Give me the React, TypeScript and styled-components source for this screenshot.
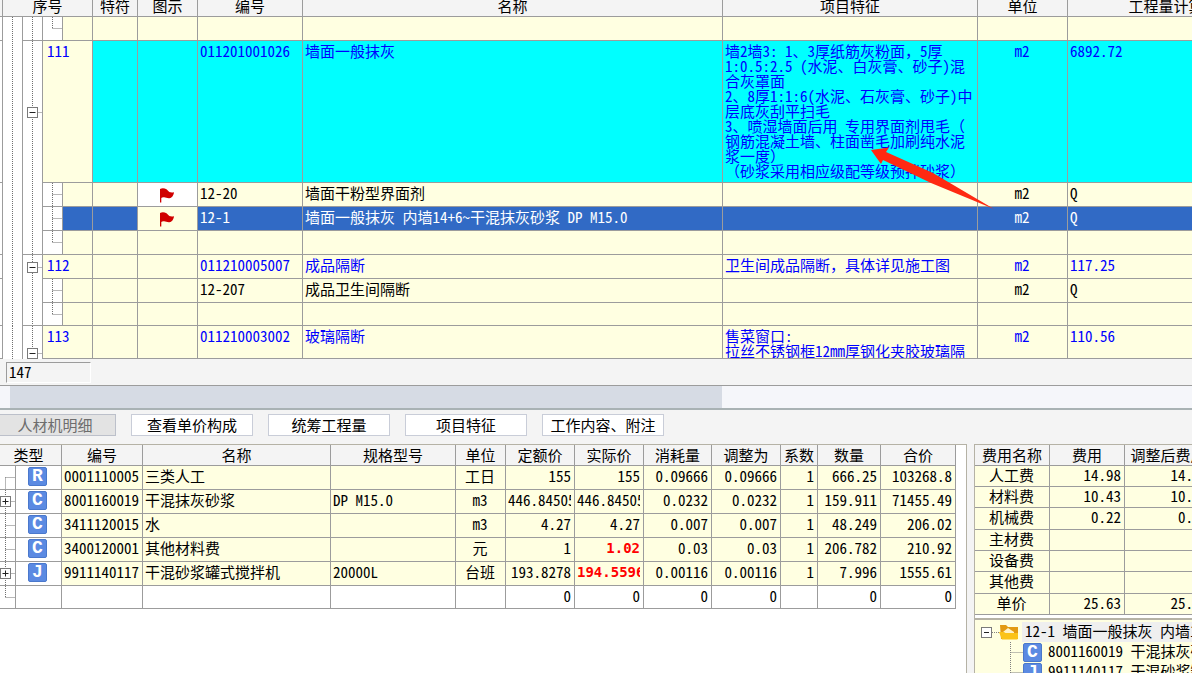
import React from 'react';
import styled, { createGlobalStyle, css } from 'styled-components';

const MONO = '"Noto Sans Mono CJK SC", "Noto Sans CJK SC", "Liberation Mono", monospace';
const LINE = '#9c9c9c';
const CREAM = '#ffffe1';
const CYAN = '#00ffff';
const NAVY = '#316ac5';
const PANEL = '#f4f4f4';

const GlobalStyle = createGlobalStyle`
  *, *::before, *::after { box-sizing: border-box; }
  body { margin: 0; background: ${PANEL}; }
  body, button, input { font: 15px/15px ${MONO}; color: #000; }
`;

const Page = styled.div`
  display: flex;
  flex-direction: column;
  height: 100vh;
  overflow: hidden;
`;

/* ---------- grid primitives ---------- */

const Grid = styled.table<{ $width: number }>`
  width: ${p => p.$width}px;
  table-layout: fixed;
  border-collapse: separate;
  border-spacing: 0;
`;

const Row = styled.tr<{ $h: number }>`
  height: ${p => p.$h}px;
`;

type CellProps = {
  $bg?: string;
  $color?: string;
  $align?: 'left' | 'center' | 'right';
  $bold?: boolean;
};

const Cell = styled.td<CellProps>`
  padding: 2px 3px 0 2px;
  vertical-align: top;
  text-align: ${p => p.$align || 'left'};
  background: ${p => p.$bg || CREAM};
  color: ${p => p.$color || '#000'};
  border-right: 1px solid ${LINE};
  border-bottom: 1px solid ${LINE};
  white-space: nowrap;
  ${p => p.$bold && css`font: bold 14px/17px "DejaVu Sans Mono", monospace;`}
`;

const FeeCell = styled(Cell)`
  padding-top: 1px;
`;

const Clip = styled.div`
  overflow-x: clip;
`;

const Feature = styled.div`
  white-space: pre;
`;

const Partial = styled(Feature)`
  height: 30px;
  overflow-y: clip;
`;

const HeadCell = styled.th`
  padding: 0;
  font-weight: normal;
  background: ${PANEL};
  border-right: 1px solid ${LINE};
  border-bottom: 1px solid ${LINE};
  white-space: nowrap;
  vertical-align: top;
`;

/* ---------- tree rails ---------- */

const Rail = styled.td<{ $bottom?: boolean }>`
  padding: 0;
  background: #fff;
  border-right: 1px solid ${LINE};
  border-bottom: ${p => (p.$bottom ? `1px solid ${LINE}` : '0')};
`;

const RailBox = styled.div`
  display: flex;
`;

type RailKind = 'pass' | 'tee' | 'end' | 'minus' | 'plus' | 'start';

function RailArt({ kind, h, w = 19, x = 9, at }: { kind: RailKind; h: number; w?: number; x?: number; at?: number }) {
  const mid = (at ?? Math.floor(h / 2)) + 0.5;
  const cx = x + 0.5;
  const boxed = kind === 'minus' || kind === 'plus';
  return (
    <RailBox>
      <svg width={w} height={h} aria-hidden="true">
        <g stroke="#707070" fill="none" strokeDasharray="1 1">
          <path d={`M${cx} ${kind === 'start' ? mid : 0}V${kind === 'end' ? mid : h}`} />
          {kind !== 'pass' && <path d={`M${cx} ${mid}H${w}`} />}
        </g>
        {boxed && (
          <>
            <rect x={cx - 5} y={mid - 5} width="10" height="10" fill="#fff" stroke="#7a7a7a" />
            <path d={`M${cx - 3} ${mid}h6`} stroke="#222" />
            {kind === 'plus' && <path d={`M${cx} ${mid - 3}v6`} stroke="#222" />}
          </>
        )}
      </svg>
    </RailBox>
  );
}

const FlagWrap = styled.div`
  display: flex;
  justify-content: center;
  padding-top: 2px;
`;

function Flag() {
  return (
    <FlagWrap>
      <svg width="14" height="17" viewBox="0 0 14 17" role="img" aria-label="flag">
        <path d="M0 2C2 .8 4.500 1 6.500 2.300 8.200 3.400 8.500 5 10 5.300c1.200.2 2.600.2 4-.1-.4 3.200-2.200 5.800-4.600 6C6.800 11.400 5.500 10 3.500 10.300 2.500 10.500 1.800 10.700 1.300 11v4.500H0z" fill="#d00000" />
      </svg>
    </FlagWrap>
  );
}

/* ---------- bill table ---------- */

const BillPane = styled.section`
  position: relative;
  flex: none;
  overflow: hidden;
`;

const Arrow = styled.svg`
  position: absolute;
  left: 865px;
  top: 140px;
`;

type Bill = {
  h: number;
  kind: 'item' | 'child' | 'blank';
  id?: string;
  code?: string;
  name?: string;
  feature?: React.ReactNode;
  unit?: string;
  qty?: string;
  flag?: boolean;
  tone?: 'cyan' | 'selected';
  edge?: boolean;
  groupEnd?: boolean;
  boxAt?: number;
};

const featureText = [
  '墙2墙3: 1、3厚纸筋灰粉面，5厚',
  '1:0.5:2.5 (水泥、白灰膏、砂子)混',
  '合灰罩面',
  '2、8厚1:1:6(水泥、石灰膏、砂子)中',
  '层底灰刮平扫毛',
  '3、喷湿墙面后用 专用界面剂甩毛（',
  '钢筋混凝土墙、柱面凿毛加刷纯水泥',
  '浆一度）',
  '（砂浆采用相应级配等级预拌砂浆）',
].join('\n');

const bills: Bill[] = [
  { h: 24, kind: 'blank', edge: true, groupEnd: true },
  { h: 142, kind: 'item', id: '111', code: '011201001026', name: '墙面一般抹灰', feature: <Feature>{featureText}</Feature>, unit: 'm2', qty: '6892.72', tone: 'cyan', edge: true },
  { h: 24, kind: 'child', code: '12-20', name: '墙面干粉型界面剂', unit: 'm2', qty: 'Q', flag: true },
  { h: 24, kind: 'child', code: '12-1', name: '墙面一般抹灰 内墙14+6~干混抹灰砂浆 DP M15.0', unit: 'm2', qty: 'Q', flag: true, tone: 'selected' },
  { h: 24, kind: 'blank', edge: true, groupEnd: true },
  { h: 24, kind: 'item', id: '112', code: '011210005007', name: '成品隔断', feature: '卫生间成品隔断，具体详见施工图', unit: 'm2', qty: '117.25', edge: true },
  { h: 24, kind: 'child', code: '12-207', name: '成品卫生间隔断', unit: 'm2', qty: 'Q' },
  { h: 23, kind: 'blank', edge: true, groupEnd: true },
  { h: 33, kind: 'item', id: '113', code: '011210003002', name: '玻璃隔断', feature: <Partial>{'售菜窗口:\n拉丝不锈钢框12mm厚钢化夹胶玻璃隔'}</Partial>, unit: 'm2', qty: '110.56', edge: true, boxAt: 27 },
];

const IdCell = styled(Cell)`
  padding-left: 4px;
`;

function BillRow({ b }: { b: Bill }) {
  const item = b.kind === 'item';
  const selected = b.tone === 'selected';
  const bg = b.tone === 'cyan' ? CYAN : selected ? NAVY : CREAM;
  const color = selected ? '#fff' : item ? '#0000ff' : '#000';
  return (
    <Row $h={b.h}>
      <Rail $bottom={b.edge} />
      <Rail><RailArt kind="pass" h={b.h} /></Rail>
      <Rail $bottom={b.groupEnd}>
        <RailArt kind={item ? 'minus' : 'pass'} h={b.groupEnd ? b.h - 1 : b.h} at={b.boxAt} />
      </Rail>
      {item ? (
        <IdCell colSpan={2} $color={color}>{b.id}</IdCell>
      ) : (
        <>
          <Rail $bottom><RailArt kind={b.kind === 'blank' ? 'end' : 'tee'} h={b.h - 1} /></Rail>
          <Cell $bg={selected ? NAVY : CREAM} />
        </>
      )}
      <Cell $bg={bg} />
      <Cell $bg={b.flag ? (selected ? CREAM : '#fff') : bg}>{b.flag && <Flag />}</Cell>
      <Cell $bg={bg} $color={color}>{b.code}</Cell>
      <Cell $bg={bg} $color={color}>{b.name}</Cell>
      <Cell $bg={bg} $color={color}>{b.feature}</Cell>
      <Cell $bg={bg} $color={color} $align="center">{b.unit}</Cell>
      <Cell $bg={bg} $color={color}>{b.qty}</Cell>
    </Row>
  );
}

const billCols = [3, 20, 20, 20, 30, 45, 60, 105, 420, 255, 90, 212];

const BillHead = styled(HeadCell)`
  line-height: 12px;
`;

const Cols = ({ widths }: { widths: number[] }) => (
  <colgroup>{widths.map((w, i) => <col key={i} style={{ width: w }} />)}</colgroup>
);

const sum = (a: number[]) => a.reduce((s, n) => s + n, 0);

/* ---------- status, scroll bar, tabs ---------- */

const StatusBar = styled.div`
  flex: none;
  padding: 3px 6px 2px;
  background: ${PANEL};
  border-bottom: 1px solid ${LINE};
`;

const Counter = styled.output`
  display: block;
  width: 85px;
  height: 21px;
  padding: 1px 2px;
  border: 1px solid #fff;
  border-top-color: ${LINE};
  border-left-color: ${LINE};
`;

const ScrollTrack = styled.div`
  flex: none;
  height: 24px;
  display: flex;
  padding-left: 10px;
  background: #f5f6fa;
  border-bottom: 2px solid #a9b2b4;
`;

const Thumb = styled.div`
  width: 712px;
  background: #d6dbe4;
`;

const Tabs = styled.nav`
  flex: none;
  display: flex;
  gap: 15px;
  padding: 4px 0 8px;
  margin-left: -6px;
`;

const Tab = styled.button<{ $active?: boolean }>`
  width: 122px;
  height: 22px;
  padding: 0 0 2px;
  border: 1px solid ${p => (p.$active ? '#bcc0ca' : '#c9cdd8')};
  background: ${p => (p.$active ? '#e3e3e3' : '#fff')};
  color: ${p => (p.$active ? '#6d6d6d' : '#000')};
`;

/* ---------- lower panes ---------- */

const Lower = styled.div`
  flex: 1;
  min-height: 0;
  display: grid;
  grid-template-columns: minmax(0, 1fr) 218px;
  gap: 7px;
`;

const Pane = styled.section`
  min-width: 0;
  overflow: hidden;
  background: #fff;
  border-top: 1px solid #b5b2a5;
`;

const LeftPane = styled(Pane)`
  border-right: 1px solid #b5b2a5;
`;

const RightPane = styled(Pane)`
  border-left: 1px solid #b5b2a5;
`;

const LowHead = styled(HeadCell)`
  padding-top: 2px;
`;

const TypeHead = styled(LowHead)`
  padding-right: 4px;
`;

const Badge = styled.span`
  display: flex;
  align-items: center;
  justify-content: center;
  flex: none;
  width: 19px;
  height: 19px;
  border: 1px solid #4a78cc;
  border-radius: 2px;
  background: #5b8ae2;
  color: #fff;
  font: bold 18px/17px "Liberation Mono", monospace;
`;

const BadgeCell = styled(Cell)`
  padding: 1px 12px 0;
`;

type Resource = { rail: RailKind; type?: string; code?: string; name?: string; spec?: string; unit?: string; nums: string[]; hot?: boolean };

const resources: Resource[] = [
  { rail: 'start', type: 'R', code: '0001110005', name: '三类人工', unit: '工日', nums: ['155', '155', '0.09666', '0.09666', '1', '666.25', '103268.8'] },
  { rail: 'plus', type: 'C', code: '8001160019', name: '干混抹灰砂浆', spec: 'DP M15.0', unit: 'm3', nums: ['446.84505', '446.84505', '0.0232', '0.0232', '1', '159.911', '71455.49'] },
  { rail: 'tee', type: 'C', code: '3411120015', name: '水', unit: 'm3', nums: ['4.27', '4.27', '0.007', '0.007', '1', '48.249', '206.02'] },
  { rail: 'tee', type: 'C', code: '3400120001', name: '其他材料费', unit: '元', nums: ['1', '1.02', '0.03', '0.03', '1', '206.782', '210.92'], hot: true },
  { rail: 'plus', type: 'J', code: '9911140117', name: '干混砂浆罐式搅拌机', spec: '20000L', unit: '台班', nums: ['193.8278', '194.5596', '0.00116', '0.00116', '1', '7.996', '1555.61'], hot: true },
  { rail: 'end', nums: ['0', '0', '0', '0', '', '0', '0'] },
];

const resourceCols = [16, 46, 81, 188, 125, 50, 69, 69, 68, 69, 37, 63, 75];
const resourceHeads = ['编号', '名称', '规格型号', '单位', '定额价', '实际价', '消耗量', '调整为', '系数', '数量', '合价'];

const fees: [string, string, string][] = [
  ['人工费', '14.98', '14.98'],
  ['材料费', '10.43', '10.43'],
  ['机械费', '0.22', '0.22'],
  ['主材费', '', ''],
  ['设备费', '', ''],
  ['其他费', '', ''],
  ['单价', '25.63', '25.63'],
];

const feeCols = [75, 75, 87];

const Tree = styled.ul`
  margin: 3px 0 0;
  padding: 2px 0 0;
  list-style: none;
  background: ${CREAM};
  border-top: 2px solid #b5b2a5;
  white-space: nowrap;
`;

const TreeRow = styled.li`
  display: flex;
  align-items: center;
  height: 20px;
  svg { flex: none; }
`;

const TreeLabel = styled.span<{ $selected?: boolean }>`
  flex: 1;
  height: 20px;
  padding: 1px 3px;
  background: ${p => (p.$selected ? '#efefef' : 'transparent')};
`;

const ChildLabel = styled(TreeLabel)`
  padding-left: 6px;
`;

function RootArt() {
  return (
    <svg width="47" height="20" aria-hidden="true">
      <path d="M17 10.500H25" stroke="#808080" strokeDasharray="1 1" />
      <rect x="6.500" y="5.500" width="10" height="10" fill="#fff" stroke="#7a7a7a" />
      <path d="M9 10.500h5" stroke="#222" />
      <path d="M25 3h6l2 2h10v12H26z" fill="#e39a12" />
      <path d="M28 10l5-4 6 4v1H28z" fill="#fff3c8" />
      <path d="M24 10h5l1.500 1h12.500v5a1.500 1.500 0 0 1-1.500 1.500H27z" fill="#fbc318" />
    </svg>
  );
}

function BranchArt() {
  return (
    <svg width="48" height="20" aria-hidden="true">
      <path d="M35.500 0V20M35.500 10.500H48" stroke="#808080" strokeDasharray="1 1" fill="none" />
    </svg>
  );
}

export default function App() {
  return (
    <Page>
      <GlobalStyle />
      <BillPane>
        <Grid $width={sum(billCols)}>
          <Cols widths={billCols} />
          <thead>
            <Row $h={17}>
              <BillHead />
              <BillHead colSpan={4}>序号</BillHead>
              {['特符', '图示', '编号', '名称', '项目特征', '单位', '工程量计算式'].map(t => <BillHead key={t}>{t}</BillHead>)}
            </Row>
          </thead>
          <tbody>{bills.map((b, i) => <BillRow key={i} b={b} />)}</tbody>
        </Grid>
        <Arrow width="135" height="75" aria-hidden="true">
          <path d="M6 10L24 7.500L21 12L68 33L129 69L66 43L18 20L16 24z" fill="#ff2a12" />
        </Arrow>
      </BillPane>
      <StatusBar><Counter>147</Counter></StatusBar>
      <ScrollTrack><Thumb /></ScrollTrack>
      <Tabs>
        <Tab $active>人材机明细</Tab>
        <Tab>查看单价构成</Tab>
        <Tab>统筹工程量</Tab>
        <Tab>项目特征</Tab>
        <Tab>工作内容、附注</Tab>
      </Tabs>
      <Lower>
        <LeftPane>
          <Grid $width={sum(resourceCols)}>
            <Cols widths={resourceCols} />
            <thead>
              <Row $h={21}>
                <TypeHead colSpan={2}>类型</TypeHead>
                {resourceHeads.map(t => <LowHead key={t}>{t}</LowHead>)}
              </Row>
            </thead>
            <tbody>
              {resources.map((r, i) => {
                const bg = r.type ? CREAM : '#fff';
                const h = r.type ? 24 : 23;
                return (
                  <Row key={i} $h={h}>
                    <Rail $bottom><RailArt kind={r.rail} h={h - 1} w={15} x={5} /></Rail>
                    <BadgeCell $bg="#fff">{r.type && <Badge>{r.type}</Badge>}</BadgeCell>
                    <Cell $bg={bg}>{r.code}</Cell>
                    <Cell $bg={bg}>{r.name}</Cell>
                    <Cell $bg={bg}>{r.spec}</Cell>
                    <Cell $bg={bg} $align="center">{r.unit}</Cell>
                    {r.nums.map((n, j) => {
                      const hot = r.hot && j === 1;
                      const wide = n.length > (hot ? 7 : 8);
                      return (
                        <Cell key={j} $bg={bg} $align="right" $bold={hot} $color={hot ? '#ff0000' : '#000'}>
                          {wide ? <Clip>{n}</Clip> : n}
                        </Cell>
                      );
                    })}
                  </Row>
                );
              })}
            </tbody>
          </Grid>
        </LeftPane>
        <RightPane>
          <Grid $width={sum(feeCols)}>
            <Cols widths={feeCols} />
            <thead>
              <Row $h={21}>
                {['费用名称', '费用', '调整后费用'].map(t => <LowHead key={t}>{t}</LowHead>)}
              </Row>
            </thead>
            <tbody>
              {fees.map(([name, a, b], i) => (
                <Row key={name} $h={i % 3 === 2 ? 22 : 21}>
                  <FeeCell $align="center">{name}</FeeCell>
                  <FeeCell $align="right">{a}</FeeCell>
                  <FeeCell $align="right">{b}</FeeCell>
                </Row>
              ))}
            </tbody>
          </Grid>
          <Tree>
            <TreeRow><RootArt /><TreeLabel $selected>12-1 墙面一般抹灰 内墙14+6~干混抹灰砂浆</TreeLabel></TreeRow>
            <TreeRow><BranchArt /><Badge>C</Badge><ChildLabel>8001160019 干混抹灰砂浆</ChildLabel></TreeRow>
            <TreeRow><BranchArt /><Badge>J</Badge><ChildLabel>9911140117 干混砂浆罐式搅拌机</ChildLabel></TreeRow>
          </Tree>
        </RightPane>
      </Lower>
    </Page>
  );
}
